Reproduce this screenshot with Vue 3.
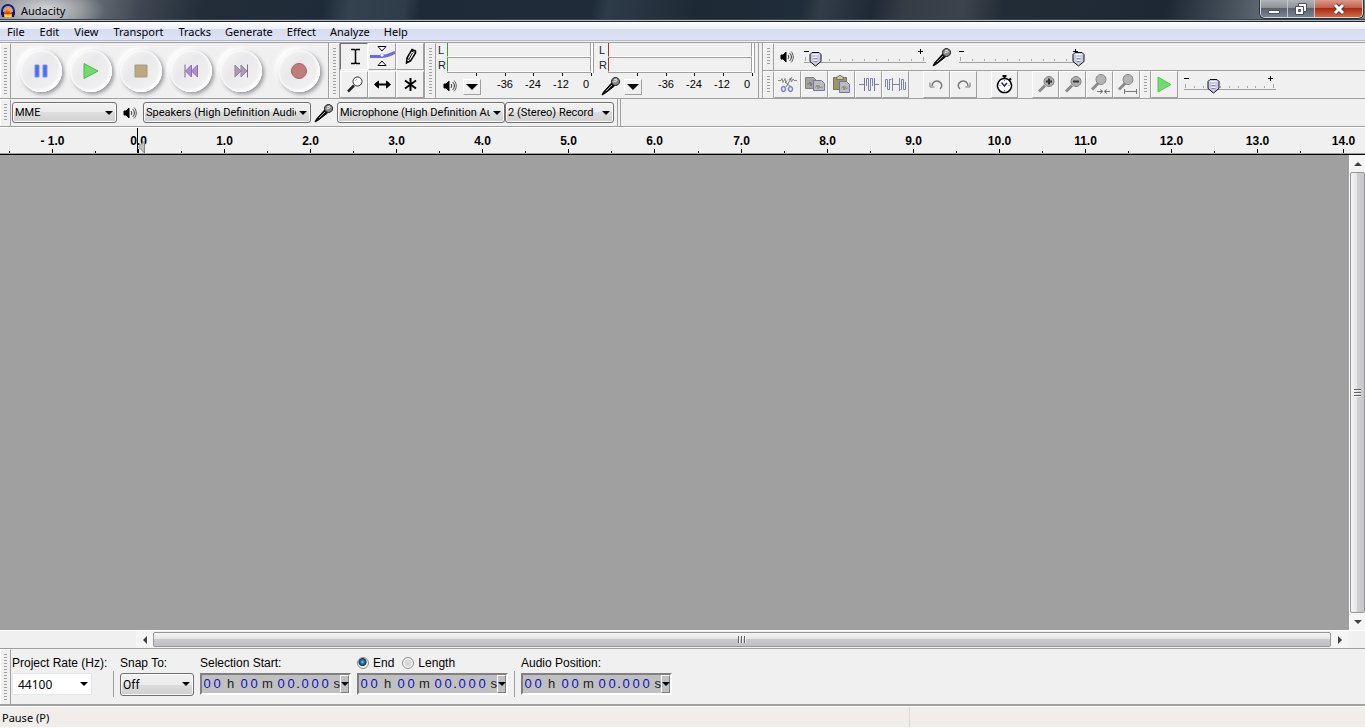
<script setup>
import { ref } from 'vue';

const menus = ['File', 'Edit', 'View', 'Transport', 'Tracks', 'Generate', 'Effect', 'Analyze', 'Help'];

const transport = [
  { name: 'Pause', shapes: [{ d: 'M5 5h4v12H5zM13 5h4v12h-4z', fill: '#4a6cf0', stroke: '#7d93ee' }] },
  { name: 'Play', shapes: [{ d: 'M4 3.5v15l14-7.5z', fill: '#6fdc6b', stroke: '#56b552' }] },
  { name: 'Stop', shapes: [{ d: 'M5 5h12v12H5z', fill: '#bba982', stroke: '#a89a78' }] },
  { name: 'Skip to Start', shapes: [{ d: 'M5 4.5v13', stroke: '#77679a' }, { d: 'M11.5 5v12l-6-6zM17.5 5v12l-6-6z', fill: '#b489dc', stroke: '#8a72ad' }] },
  { name: 'Skip to End', shapes: [{ d: 'M17.5 4.5v13', stroke: '#77708a' }, { d: 'M5 5v12l6-6zM11 5v12l6-6z', fill: '#ac9bb8', stroke: '#91859e' }] },
  { name: 'Record', shapes: [{ d: 'M11 3.5a7.5 7.5 0 1 0 .01 0z', fill: '#c17b7b', stroke: '#a26666' }] },
];

const lens = (mark) => [
  { d: 'M6 19.5l6-6', stroke: '#8a8a8a', width: 3 },
  { d: 'M16 4.5a5 5 0 1 0 .01 0z', fill: '#adadad', stroke: '#7f7f7f' },
  { d: mark, stroke: '#333', width: 2 },
];
const smallLens = (mark) => [
  { d: 'M5 17.5l7-7', stroke: '#8a8a8a', width: 3 },
  { d: 'M14 2.5a5 5 0 1 0 .01 0z', fill: '#b4b4b4', stroke: '#858585' },
  { d: mark, stroke: '#777' },
];

const tools = [
  { name: 'Selection Tool', shapes: [{ d: 'M9 5.5h3.5l1 1 1-1H18M9 19.5h3.5l1-1 1 1H18M13.5 6v13', stroke: '#000', width: 1.5 }] },
  {
    name: 'Envelope Tool',
    shapes: [
      { d: 'M0 12.5h12c5 0 8-2 13-4', stroke: '#6b6be0', width: 3 },
      { d: 'M8 2.5h8l-4 4.5zM8 21.5h8l-4-4.5z', fill: '#fff', stroke: '#000' },
      { d: 'M12 9.5a1.5 1.5 0 1 0 .01 0z', fill: '#fff', stroke: '#b8b8f0' },
    ],
  },
  { name: 'Draw Tool', shapes: [{ d: 'M8.5 19l.5-5 5-8.5 3.5 1.5v2l-5 8z', fill: '#fff', stroke: '#000', width: 1.5 }, { d: 'M13.5 7l3 1.5M9 14l3 2.5M14.5 9l-3.5 6', stroke: '#000' }, { d: 'M8.5 19v-2l1.5 1z', fill: '#000', stroke: '#000' }] },
  { name: 'Zoom Tool', shapes: [{ d: 'M6 19.5l6-6', stroke: '#222', width: 2.5 }, { d: 'M15.5 5a4.5 4.5 0 1 0 .01 0z', fill: '#fff', stroke: '#222' }, { d: 'M13 9l2-2', stroke: '#aaa' }] },
  { name: 'Time Shift Tool', shapes: [{ d: 'M6 12.5h13', stroke: '#000', width: 2 }, { d: 'M4.5 12.5l4-3.5v7zM20.5 12.5l-4-3.5v7z', fill: '#000', stroke: '#000' }] },
  { name: 'Multi-Tool', shapes: [{ d: 'M12.5 6v13M7 8.5l11 8M18 8.5l-11 8', stroke: '#000', width: 2 }] },
];

const edits = [
  [
    {
      name: 'Cut',
      shapes: [
        { d: 'M3 8.5h3l1-2 1 4 2-4 1 4 1-2M14 8l1.5-2 1 4 1.5-3 1 1.5h3', stroke: '#888' },
        { d: 'M17 5l-6 10M10 10l6 5', stroke: '#777' },
        { d: 'M8.5 14.5a2 2.5 0 1 0 .01 0zM15.5 14.5a2 2.5 0 1 0 .01 0z', stroke: '#7f7fb8', width: 1.5 },
      ],
    },
    {
      name: 'Copy',
      shapes: [
        { d: 'M3.5 5.5h8l3 3v8h-11z', fill: '#a3a3a3', stroke: '#808080' },
        { d: 'M5 12h2l1-2 1 4 1-3', stroke: '#777' },
        { d: 'M11.5 8.5h8l3 3v7h-11z', fill: '#bdbdbd', stroke: '#7373a8' },
        { d: 'M13 15h1l1-2 1 4 1-4 1 3 1-1h2', stroke: '#8c8c8c' },
      ],
    },
    {
      name: 'Paste',
      shapes: [
        { d: 'M4.5 5.5h13v12h-13z', fill: '#999769', stroke: '#777650' },
        { d: 'M7.5 7.5V5H9l1-1.5h2L13 5h1.5v2.5z', fill: '#c4c4b0', stroke: '#777650' },
        { d: 'M10.5 9.5h7l3 3v8h-10z', fill: '#bdbdbd', stroke: '#7373a8' },
        { d: 'M12 16h1l1-2 1 4 1-4 1 3 1-1h1', stroke: '#8c8c8c' },
      ],
    },
    {
      name: 'Trim',
      shapes: [
        { d: 'M3 12.5h5M18 12.5h5', stroke: '#7f7fb8' },
        { d: 'M10.5 14V6.5h2v12h2v-12h2V14', stroke: '#8080b8' },
        { d: 'M8.5 6v13M18.5 6v13', stroke: '#777' },
      ],
    },
    {
      name: 'Silence',
      shapes: [
        { d: 'M2.5 15V7.5h2v10h2v-10h2M17.5 17.5h1v-10h2v10h2V10', stroke: '#8080b8' },
        { d: 'M9 12.5h7', stroke: '#7f7fb8' },
        { d: 'M9.5 6v13M16.5 6v13', stroke: '#888' },
      ],
    },
  ],
  [
    { name: 'Undo', shapes: [{ d: 'M8 14c0-4 4-6 7-4.5s4 5 1 7.5', stroke: '#777', width: 1.5 }, { d: 'M6 10.5V15h4.5', stroke: '#777' }] },
    { name: 'Redo', shapes: [{ d: 'M17 14c0-4-4-6-7-4.5s-4 5-1 7.5', stroke: '#777', width: 1.5 }, { d: 'M19 10.5V15h-4.5', stroke: '#777' }] },
  ],
  [
    {
      name: 'Timer',
      shapes: [
        { d: 'M10.5 4h4M12.5 4v3M17.5 6.5L19 8', stroke: '#000', width: 2 },
        { d: 'M12.5 6.5a7 7 0 1 0 .01 0z', fill: '#fff', stroke: '#000', width: 1.5 },
        { d: 'M9.5 10.5l3 3.5 2.5-3', stroke: '#2222a0', width: 1.5 },
        { d: 'M12.5 8v1M12.5 18v1M7.5 13.5h1M16.5 13.5h1', stroke: '#666' },
      ],
    },
  ],
  [
    { name: 'Zoom In', shapes: lens('M16 6.5v6M13 9.5h6') },
    { name: 'Zoom Out', shapes: lens('M13 9.5h6') },
    { name: 'Fit Selection', shapes: smallLens('M10 19.5h5M23 19.5h-5M13 17.5l3 2-3 2M20 17.5l-3 2 3 2') },
    { name: 'Fit Project', shapes: smallLens('M10.5 19.5h12M10.5 17v5M22.5 17v5') },
  ],
];

const speaker = [
  { d: 'M1 5h2l3-3v10L3 9H1z', fill: '#000', stroke: '#000' },
  { d: 'M8 5c1 1 1 3 0 4M9.5 3c2.5 2 2.5 6 0 8', stroke: '#333' },
  { d: 'M11 1.5c3 3 3 8 0 11', stroke: '#555' },
];
const mic = [
  { d: 'M1 19l1.5-3 8-9 3 3-9 7z', fill: '#111', stroke: '#000' },
  { d: 'M5 15l6-6', stroke: '#aaa' },
  { d: 'M14.5 1.5a4 4 0 1 0 .01 0z', fill: '#888', stroke: '#111' },
  { d: 'M13 4l3-1M12.5 6l4-1.5', stroke: '#eee' },
];

const meters = [
  { name: 'Playback', color: '#35a035', icon: speaker, box: 14 },
  { name: 'Recording', color: '#a03535', icon: mic, box: 20 },
];

const output = ref(4);
const input = ref(100);
const speed = ref(28);
const length = ref('end');
const rate = ref('44100');

// timeline: one mark every half second, labels on whole seconds
const marks = [];
for (let i = -3; i <= 28; i++) {
  marks.push({
    x: Math.round(138 + i * 43.04) + 0.5,
    major: i % 2 === 0,
    label: i < 0 ? `- ${-i / 2}.0` : `${i / 2}.0`,
  });
}

const timeCells = ['0', '0', 'h', '0', '0', 'm', '0', '0', '.', '0', '0', '0', 's'];
const cellClass = (c) => {
  if (c === '0') return 'digit';
  if (c === '.') return 'dot';
  return c === 's' ? 'unit last' : 'unit';
};
</script>

<script>
import { defineComponent, h } from 'vue';

const VIcon = defineComponent({
  props: { shapes: Array, box: { type: Number, default: 25 } },
  setup(props) {
    return () =>
      h('svg', { width: props.box, height: props.box, viewBox: `0 0 ${props.box} ${props.box}`, 'aria-hidden': 'true' },
        props.shapes.map((s) => h('path', { d: s.d, fill: s.fill || 'none', stroke: s.stroke, 'stroke-width': s.width || 1 })));
  },
});

const VSlider = defineComponent({
  props: { modelValue: Number, label: String, width: Number },
  emits: ['update:modelValue'],
  setup(props, { emit }) {
    const ticks = () => Array.from({ length: 11 }, (_, i) => Math.round(1 + (i * (props.width - 4)) / 10) + 0.5);
    return () =>
      h('div', { class: 'slider', style: { width: props.width + 'px' } }, [
        h('svg', { width: props.width, height: 20, 'aria-hidden': 'true' }, [
          h('path', { d: `M0 3.5h5M${props.width - 8} 3.5h5M${props.width - 5.5} 1v5`, stroke: '#000' }),
          h('path', { d: `M0 14.5h${props.width}`, stroke: '#a0a0a0' }),
          ticks().map((x, i) => h('path', { d: `M${x} ${i % 10 ? 11 : 9}v${i % 10 ? 2 : 4}`, stroke: '#a8a8a8' })),
        ]),
        h('input', {
          type: 'range',
          'aria-label': props.label,
          value: props.modelValue,
          onInput: (e) => emit('update:modelValue', Number(e.target.value)),
        }),
      ]);
  },
});
</script>

<template>
  <div class="window">
    <header class="titlebar">
      <svg class="logo" width="16" height="16" viewBox="0 0 16 16" aria-hidden="true">
        <path d="M2 12V8a6 6 0 0 1 12 0v4" fill="none" stroke="#1a1a8c" stroke-width="2" />
        <path d="M4 12c0-10 8-10 8 0l-1 2H5z" fill="#f7a81b" />
        <path d="M4 9l1-1 1 2 1-4 1 4 1-3 1 3 2-1v2H4z" fill="#e8301a" />
        <path d="M5 12h6v2H5z" fill="#ffe11a" />
        <path d="M1 9h3v5H2zM12 9h3l-1 5h-2z" fill="#15156b" />
      </svg>
      <span class="title">Audacity</span>
      <div class="controls">
        <button aria-label="Minimize">
          <svg width="14" height="14"><path d="M1.5 8.5h11v3h-11z" fill="#fff" stroke="#4a5060" /></svg>
        </button>
        <button aria-label="Restore">
          <svg width="14" height="14">
            <path d="M4.5 1.5h8v8h-8z" fill="#fff" stroke="#4a5060" />
            <path d="M1.5 4.5h8v8h-8z" fill="#fff" stroke="#4a5060" />
            <path d="M4.5 7.5h2v2h-2z" fill="#777" stroke="#4a5060" />
          </svg>
        </button>
        <button class="close" aria-label="Close">
          <svg width="14" height="14">
            <path d="M3 3l8 8M11 3l-8 8" stroke="#5a3a40" stroke-width="5" />
            <path d="M3 3l8 8M11 3l-8 8" stroke="#fff" stroke-width="3" />
          </svg>
        </button>
      </div>
    </header>

    <nav class="menubar">
      <button v-for="m in menus" :key="m">{{ m }}</button>
    </nav>

    <div class="dock">
      <section class="bar transport">
        <i class="grip"></i>
        <div class="rounds">
          <button v-for="t in transport" :key="t.name" class="round" :class="{ record: t.name === 'Record' }" :aria-label="t.name">
            <VIcon :shapes="t.shapes" :box="22" />
          </button>
        </div>
      </section>

      <section class="bar">
        <i class="grip"></i>
        <div class="tools">
          <button v-for="(t, i) in tools" :key="t.name" class="flat" :class="{ pressed: i === 0 }" :aria-label="t.name">
            <VIcon :shapes="t.shapes" />
          </button>
        </div>
      </section>

      <section class="bar meters">
        <i class="grip"></i>
        <div v-for="m in meters" :key="m.name" class="meter">
          <div v-for="ch in ['L', 'R']" :key="ch" class="channel">
            <span>{{ ch }}</span>
            <div class="level" :style="{ borderLeftColor: m.color }"></div>
            <div class="clip"></div>
          </div>
          <svg width="161" height="4" aria-hidden="true">
            <path d="M40.5 0v3M69.5 0v3M97.5 0v3M126.5 0v3M155.5 0v3" stroke="#000" />
          </svg>
          <div class="scale">
            <div class="meter-icon"><VIcon :shapes="m.icon" :box="m.box" /></div>
            <button class="drop" :aria-label="m.name + ' meter'"></button>
            <span>-36</span><span>-24</span><span>-12</span><span class="zero">0</span>
          </div>
        </div>
      </section>

      <div class="stack">
        <section class="bar mixer">
          <i class="grip"></i>
          <VIcon :shapes="speaker" :box="14" />
          <VSlider v-model="output" label="Output volume" :width="122" />
          <VIcon :shapes="mic" :box="20" />
          <VSlider v-model="input" label="Input volume" :width="122" />
        </section>
        <div class="lower">
          <section class="bar edit">
            <i class="grip"></i>
            <div v-for="(g, i) in edits" :key="i" class="group">
              <button v-for="e in g" :key="e.name" class="flat" :aria-label="e.name">
                <VIcon :shapes="e.shapes" />
              </button>
            </div>
          </section>
          <section class="bar speed">
            <i class="grip"></i>
            <button class="flat" aria-label="Play at speed">
              <VIcon :shapes="[{ d: 'M6 5v15l13-7.5z', fill: '#6fdc6b', stroke: '#5cc658' }]" />
            </button>
            <VSlider v-model="speed" label="Playback speed" :width="92" />
          </section>
        </div>
      </div>
    </div>

    <div class="devices">
      <section class="bar">
        <i class="grip"></i>
        <div class="pick host">
          <select aria-label="Audio host"><option>MME</option></select>
        </div>
        <div class="device-icon"><VIcon :shapes="speaker" :box="14" /></div>
        <div class="pick speakers">
          <select aria-label="Output device"><option>Speakers (High Definition Audio)</option></select>
        </div>
        <div class="device-icon"><VIcon :shapes="mic" :box="20" /></div>
        <div class="pick microphone">
          <select aria-label="Input device"><option>Microphone (High Definition Audio)</option></select>
        </div>
        <div class="pick channels">
          <select aria-label="Input channels"><option>2 (Stereo) Record</option></select>
        </div>
      </section>
      <i class="edge"></i>
    </div>

    <svg class="ruler" width="100%" height="27">
      <g v-for="m in marks" :key="m.x">
        <path :d="`M${m.x} ${m.major ? 21 : 23}V25`" stroke="#000" />
        <text v-if="m.major" :x="m.x" y="17" text-anchor="middle">{{ m.label }}</text>
      </g>
      <path d="M144.5 13v12l-6-6z" fill="#c0c0c0" stroke="#888" />
      <path d="M137.5 0v25" stroke="#000" />
    </svg>

    <main class="work">
      <div class="canvas"></div>
      <div class="vscroll">
        <button aria-label="Scroll up"><i class="up"></i></button>
        <div class="vthumb"><i></i></div>
        <button aria-label="Scroll down"><i class="down"></i></button>
      </div>
    </main>
    <div class="hscroll">
      <button aria-label="Scroll left"><i class="left"></i></button>
      <div class="hthumb"><i></i></div>
      <button aria-label="Scroll right"><i class="right"></i></button>
    </div>

    <footer class="selection">
      <i class="grip"></i>
      <div class="fields">
        <div class="field rate">
          <label for="rate">Project Rate (Hz):</label>
          <div class="combo">
            <input id="rate" v-model="rate" type="text" />
            <button aria-label="Choose rate"></button>
          </div>
        </div>
        <i class="rule"></i>
        <div class="field">
          <label for="snap">Snap To:</label>
          <div class="pick snap">
            <select id="snap"><option>Off</option><option>Nearest</option><option>Prior</option></select>
          </div>
        </div>
        <div v-for="f in ['Selection Start:', 'end', 'Audio Position:']" :key="f" class="with-rule">
          <i v-if="f === 'Audio Position:'" class="rule"></i>
          <div class="field">
            <div v-if="f === 'end'" class="radios">
              <label><input v-model="length" type="radio" name="length" value="end" />End</label>
              <label><input v-model="length" type="radio" name="length" value="length" />Length</label>
            </div>
            <span v-else class="caption">{{ f }}</span>
            <div class="time">
              <span v-for="(c, i) in timeCells" :key="i" :class="cellClass(c)">{{ c }}</span>
              <button aria-label="Time format"></button>
            </div>
          </div>
        </div>
      </div>
    </footer>

    <div class="status">
      <span>Pause (P)</span>
      <span class="second"></span>
    </div>
  </div>
</template>

<style>
body {
  margin: 0;
  background: #fff;
}

.slider {
  position: relative;
  height: 20px;
}

.slider svg {
  display: block;
}

.slider input {
  position: absolute;
  left: 0;
  top: 4px;
  width: calc(100% + 4px);
  height: 15px;
  margin: 0;
  appearance: none;
  background: transparent;
}

.slider input::-webkit-slider-thumb {
  appearance: none;
  width: 13px;
  height: 15px;
  background: url("data:image/svg+xml,%3Csvg xmlns='http://www.w3.org/2000/svg' width='13' height='15'%3E%3Cpath d='M3 .5h7l2 2v7l-5.5 4.5-5.5-4.5v-7z' fill='%23c8c8e8' stroke='%23111'/%3E%3Cpath d='M3.5 2.5h6M4.5 5.5h4M4.5 8.5h4' stroke='%23fff'/%3E%3Cpath d='M4.5 6.5h4M4.5 9.5h4' stroke='%238888b0'/%3E%3C/svg%3E");
}
</style>

<style scoped>
.window {
  display: flex;
  flex-direction: column;
  min-height: calc(100vh - 1px);
  background: #f0f0f0;
  color: #000;
  font: 11px "Noto Sans", sans-serif;
}

button,
input,
select {
  margin: 0;
  padding: 0;
  border: 0;
  box-sizing: border-box;
  border-radius: 0;
  background: transparent;
  color: inherit;
  font: inherit;
}

svg {
  display: block;
  flex: none;
}

.titlebar {
  display: flex;
  align-items: center;
  height: 20px;
  border-bottom: 1px solid #b4b9c0;
  box-shadow: inset 0 -1px #3a444e;
  background:
    radial-gradient(ellipse 60px 24px at 45px 10px, rgba(255, 255, 255, .7), transparent),
    linear-gradient(100deg, #858a90 0, #70767d 80px, #3e4751 140px, #222d39 200px, #1f2b38 320px, #344250 345px, #2f3c49 400px, #1e2a37 415px, #1f2b38 585px, #2e3b48 600px, #1d2935 690px, #1f2c39 790px, #323d48 810px, #1e2935 860px, #343c44 890px, #3c444b 950px, #222c36 990px, #1f2a36 1090px, #1c2733 1150px, #4a5560 1220px, #777c7e 1270px);
}

.logo {
  margin: 2px 5px 0 0;
}

.title {
  flex: 1;
  padding-top: 1px;
}

.controls {
  display: flex;
  align-self: flex-start;
  height: 17px;
  margin-right: 2px;
  border: 1px solid #d0d5d8;
  border-top: 0;
  border-radius: 0 0 5px 5px;
  overflow: hidden;
  box-shadow: 0 0 0 1px #2a333c;
}

.controls button {
  display: flex;
  align-items: center;
  justify-content: center;
  width: 27px;
  border-right: 1px solid #c0c4c8;
  background: linear-gradient(#b0b4b8, #8d9297 45%, #5a626c 50%, #7b8494);
}

.controls .close {
  width: 47px;
  border: 0;
  background: linear-gradient(#d99a8c, #c4614c 45%, #a82a15 50%, #d26a45);
}

.menubar {
  display: flex;
  gap: 1px;
  height: 18px;
  border-top: 1px solid #1c242c;
  border-bottom: 1px solid #b4bacb;
  background: linear-gradient(#fff, #eceff8 7px, #d6dcef 7px, #dfe5f6);
}

.menubar button {
  padding: 1px 7px 0 6px;
}

.menubar button:first-child,
.menubar button:nth-child(-n+5) {
  padding-left: 7px;
}

.dock,
.devices {
  display: flex;
  border-bottom: 1px solid #a0a0a0;
}

.dock {
  margin-top: 1px;
  height: 55px;
  border-top: 1px solid #a0a0a0;
}

.devices {
  height: 27px;
}

.bar {
  display: flex;
  border-right: 1px solid #a0a0a0;
}

.grip {
  flex: none;
  width: 11px;
  box-sizing: border-box;
  padding: 4px 3px;
  border: solid #fff;
  border-width: 1px 0 0 1px;
  border-right: 1px solid #a0a0a0;
  background: repeating-linear-gradient(#a0a0a0 0 1px, transparent 1px 3px) content-box;
}

.rounds {
  display: flex;
  align-items: center;
  gap: 8px;
  padding: 0 8px 0 9px;
}

.round {
  display: flex;
  align-items: center;
  justify-content: center;
  width: 42px;
  height: 42px;
  border-radius: 50%;
  background: linear-gradient(135deg, #f8f8f8, #e9e9eb 40%, #f4f4f4);
  box-shadow: 2px 2px 4px #929298, -3px -3px 4px #fff, inset 1px 1px 3px #fff, inset -2px -2px 3px #fff;
}

.record {
  margin-left: 8px;
}

.tools {
  display: grid;
  grid-template-columns: repeat(3, 28px);
}

.flat {
  display: flex;
  align-items: center;
  justify-content: center;
  height: 27px;
  overflow: hidden;
  border: 1px solid #fff;
  border-right-color: #a0a0a0;
  border-bottom-color: #a0a0a0;
}

.pressed {
  border-color: #707070 #fff #fff #707070;
}

.meter {
  width: 161px;
}

.channel {
  display: flex;
  height: 15px;
}

.channel span {
  width: 9px;
  padding-left: 2px;
  line-height: 14px;
  font-family: "Liberation Sans", sans-serif;
  color: #223;
}

.level {
  flex: 1;
  height: 13px;
  border-left: 1px solid;
  border-right: 1px solid #a0a0a0;
  border-bottom: 1px solid #fff;
  box-shadow: 0 1px #a0a0a0;
}

.clip {
  width: 2px;
  margin-right: 3px;
  border-right: 1px solid #a0a0a0;
  background: #fff;
}

.scale {
  display: flex;
  align-items: flex-start;
}

.meter-icon {
  display: flex;
  flex: none;
  align-items: center;
  justify-content: center;
  width: 26px;
  height: 18px;
  padding-left: 1px;
}

.scale span {
  flex: none;
  width: 28px;
  line-height: 14px;
  text-align: center;
  font-family: "Liberation Sans", sans-serif;
}

.scale .zero {
  width: 22px;
}

.drop {
  display: flex;
  flex: none;
  align-items: center;
  justify-content: center;
  width: 18px;
  height: 16px;
  margin: 2px 10px 0 0;
  border: 1px solid #fff;
  border-right-color: #a0a0a0;
  border-bottom-color: #a0a0a0;
}

.drop::after {
  content: "";
  border: 6px solid transparent;
  border-top-color: #000;
  border-bottom: 0;
}

.stack {
  flex: 1;
  margin-left: 3px;
  border-left: 1px solid #a0a0a0;
}

.mixer {
  align-items: center;
  height: 27px;
  border-right: 0;
  border-bottom: 1px solid #a0a0a0;
}

.mixer .grip {
  align-self: stretch;
  margin-right: 6px;
}

.mixer .slider {
  margin: 3px 6px 0 10px;
}

.mixer .slider:last-child {
  margin-left: 7px;
}

.lower {
  display: flex;
  height: 27px;
}

.group {
  display: flex;
  margin-right: 14px;
}

.group:last-child {
  margin-right: 0;
}

.lower .flat {
  width: 27px;
}

.edit {
  border-right: 0;
}

.speed {
  border-right: 0;
}

.speed .slider {
  margin: 4px 0 0 6px;
}

.devices .bar {
  align-items: center;
  padding-right: 3px;
}

.devices .grip {
  align-self: stretch;
}

.edge {
  width: 2px;
  border-right: 1px solid #a0a0a0;
}

.device-icon {
  display: flex;
  justify-content: center;
  width: 26px;
}

.pick {
  position: relative;
}

.pick select {
  width: 100%;
  height: 21px;
  padding: 0 14px 0 2px;
  appearance: none;
  border: 1px solid #707070;
  border-radius: 3px;
  box-shadow: inset 0 0 0 1px #fafafa;
  background: linear-gradient(#f2f2f2, #ebebeb 50%, #dddddd 50%, #cfcfcf);
  font: 11px Roboto, "Noto Sans", sans-serif;
}

.pick::after,
.combo button::after,
.time button::after {
  content: "";
  border: 4px solid transparent;
  border-top-color: #000;
  border-bottom: 0;
}

.pick::after {
  position: absolute;
  right: 4px;
  top: 9px;
  pointer-events: none;
}

.host {
  width: 105px;
  margin-left: 1px;
}

.speakers,
.microphone {
  width: 168px;
}

.channels {
  width: 109px;
}

.ruler {
  height: 26px;
  border-top: 1px solid #fff;
  border-bottom: 1px solid #000;
  box-shadow: inset 0 -1px #a0a0a0;
}

.ruler text {
  font: bold 12px "Liberation Sans", sans-serif;
}

.work {
  display: flex;
  flex: 1;
}

.canvas {
  flex: 1;
  background: #a0a0a0;
}

.vscroll {
  display: flex;
  flex-direction: column;
  width: 15px;
  border-left: 1px solid #fff;
  background: #f0f0f0;
}

.vscroll button,
.hscroll button {
  display: flex;
  align-items: center;
  justify-content: center;
  width: 17px;
  height: 17px;
  background: #f5f5f5;
}

.vscroll button {
  width: 15px;
}

.vthumb,
.hthumb {
  display: flex;
  align-items: center;
  justify-content: center;
  flex: 1;
  border: 1px solid #979797;
  border-radius: 2px;
  background: linear-gradient(to right, #f5f5f5, #e6e6e8 45%, #d0d0d4 50%, #c6c6ca);
}

.hthumb {
  margin: 1px 0;
  background: linear-gradient(#f5f5f5, #e6e6e8 45%, #cacace 50%, #c0c0c4);
}

.vthumb i {
  width: 7px;
  height: 8px;
  background: repeating-linear-gradient(#606060 0 1px, #f4f4f4 1px 2px, transparent 2px 3px);
}

.hthumb i {
  width: 8px;
  height: 7px;
  background: repeating-linear-gradient(to right, #606060 0 1px, #f4f4f4 1px 2px, transparent 2px 3px);
}

.up,
.down,
.left,
.right {
  border: 4px solid transparent;
}

.up {
  border-top: 0;
  border-bottom-color: #404040;
}

.down {
  border-bottom: 0;
  border-top-color: #404040;
}

.left {
  border-left: 0;
  border-right-color: #404040;
}

.right {
  border-right: 0;
  border-left-color: #404040;
}

.hscroll {
  display: flex;
  height: 17px;
  padding: 0 17px 0 136px;
  border-top: 1px solid #fff;
}

.selection {
  display: flex;
  height: 55px;
  border-top: 1px solid #a0a0a0;
  border-bottom: 2px solid #a0a0a0;
}

.fields {
  display: flex;
  align-items: flex-start;
  gap: 6px;
  padding: 6px 0 0 1px;
  font: 12px "Liberation Sans", sans-serif;
}

.field label,
.caption,
.radios {
  display: block;
  height: 18px;
  line-height: 16px;
  white-space: nowrap;
}

.rate {
  width: 95px;
}

.rule {
  width: 1px;
  height: 26px;
  margin-top: 16px;
  background: #a0a0a0;
}

.with-rule {
  display: flex;
  gap: 6px;
}

.combo {
  display: flex;
  width: 80px;
  height: 22px;
  background: #fff;
  box-shadow: inset 0 0 0 1px #e3e6ec;
}

.combo input {
  flex: 1;
  min-width: 0;
  padding-left: 6px;
  font: 12px "Noto Sans", sans-serif;
}

.combo button {
  width: 17px;
}

.combo button,
.time button {
  display: flex;
  align-items: center;
  justify-content: center;
}

.snap {
  width: 74px;
}

.snap select {
  height: 23px;
  font: 12px Roboto, "Noto Sans", sans-serif;
}

.radios {
  display: flex;
  gap: 8px;
}

.radios label {
  display: flex;
}

.radios input {
  width: 12px;
  height: 12px;
  margin: 2px 4px 0 0;
  appearance: none;
  border: 1px solid #8e8f8f;
  border-radius: 50%;
  background: radial-gradient(#d8d8d8 40%, #f8f8f8 60%);
}

.radios input:checked {
  background: radial-gradient(circle at 45% 40%, #7fd4f5 0, #1a6f9c 25%, #123c5a 45%, #f0f0f0 55%);
}

.time {
  display: flex;
  align-items: center;
  width: 147px;
  height: 18px;
  border: 2px solid #808080;
  border-right-color: #fff;
  border-bottom-color: #fff;
  background: #c0c0c0;
  font: 13px/18px "Liberation Sans", sans-serif;
}

.time .digit {
  width: 10px;
  text-align: center;
  color: #1010c0;
}

.time .dot {
  width: 4px;
  text-align: center;
}

.time .unit {
  width: 17px;
  text-align: center;
  color: #222;
}

.time .last {
  width: 10px;
  text-align: right;
}

.time button {
  width: 9px;
  height: 18px;
  border: 1px solid #fff;
  border-right-color: #808080;
  border-bottom-color: #808080;
}

.status {
  display: flex;
  align-items: center;
  height: 20px;
  border-top: 1px solid #fff;
  background: #f1edeb;
}

.status span {
  flex: 2;
  padding-left: 2px;
}

.status .second {
  flex: 1;
  align-self: stretch;
  border-left: 1px solid #dcd8d6;
}
</style>
